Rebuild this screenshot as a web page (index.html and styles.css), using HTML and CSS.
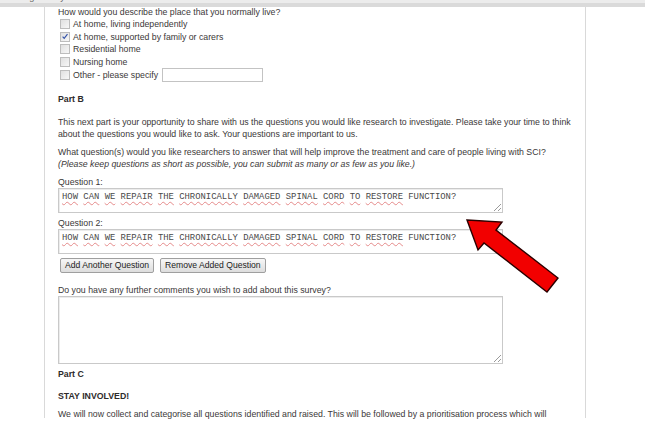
FILE: index.html
```html
<!DOCTYPE html>
<html lang="en">
<head>
<meta charset="utf-8">
<title>Survey</title>
<link rel="stylesheet" href="styles.css">
</head>
<body>
<div class="top"><span class="crumb">Tracking Survey</span></div>
<main class="page">
  <p class="q">How would you describe the place that you normally live?</p>
  <ul class="opts">
    <li><span class="cb"></span>At home, living independently</li>
    <li><span class="cb"><svg viewBox="0 0 9 9" width="9" height="9"><path d="M1.8 4.6 L3.6 6.6 L7.3 1.8" fill="none" stroke="#3352a8" stroke-width="1.3"/></svg></span>At home, supported by family or carers</li>
    <li><span class="cb"></span>Residential home</li>
    <li><span class="cb"></span>Nursing home</li>
    <li class="other"><span class="cb"></span>Other - please specify <span class="input"></span></li>
  </ul>
  <h3 class="h partb">Part B</h3>
  <p class="para">This next part is your opportunity to share with us the questions you would like research to investigate. Please take your time to think<br>about the questions you would like to ask. Your questions are important to us.</p>
  <p class="para2">What question(s) would you like researchers to answer that will help improve the treatment and care of people living with SCI?<br><em>(Please keep questions as short as possible, you can submit as many or as few as you like.)</em></p>
  <div class="label l1">Question 1:</div>
  <div class="ta grip"><span class="sp">HOW</span> <span class="sp">CAN</span> <span class="sp">WE</span> <span class="sp">REPAIR</span> <span class="sp">THE</span> <span class="sp">CHRONICALLY</span> <span class="sp">DAMAGED</span> <span class="sp">SPINAL</span> <span class="sp">CORD</span> <span class="sp">TO</span> <span class="sp">RESTORE</span> FUNCTION?</div>
  <div class="label l2">Question 2:</div>
  <div class="ta"><span class="sp">HOW</span> <span class="sp">CAN</span> <span class="sp">WE</span> <span class="sp">REPAIR</span> <span class="sp">THE</span> <span class="sp">CHRONICALLY</span> <span class="sp">DAMAGED</span> <span class="sp">SPINAL</span> <span class="sp">CORD</span> <span class="sp">TO</span> <span class="sp">RESTORE</span> FUNCTION?</div>
  <div class="buttons">
    <button class="btn b1">Add Another Question</button>
    <button class="btn b2">Remove Added Question</button>
  </div>
  <p class="comments">Do you have any further comments you wish to add about this survey?</p>
  <div class="ta big grip"></div>
  <h3 class="h partc">Part C</h3>
  <h3 class="h stay">STAY INVOLVED!</h3>
  <p class="last">We will now collect and categorise all questions identified and raised. This will be followed by a prioritisation process which will</p>
</main>
<svg class="arrow" width="645" height="424" viewBox="0 0 645 424">
  <polygon points="467,220 502,222 496,230 558,278 547,292 484,243 478,250" fill="#f20000" stroke="#2a0000" stroke-width="1.4" stroke-linejoin="miter"/>
</svg>
</body>
</html>
```
FILE: styles.css
```css
html, body {
  margin: 0;
  padding: 0;
  background: #fff;
  overflow: hidden;
}
body {
  font-family: "Liberation Sans", Arial, sans-serif;
  font-size: 8.75px;
  color: #3b3838;
  width: 645px;
  height: 424px;
  position: relative;
}
.top {
  height: 7px;
  overflow: hidden;
  background: linear-gradient(#ececec 0 3px, #dadada 3px 7px);
}
.crumb {
  display: block;
  margin-top: -8.5px;
  line-height: 10px;
  font-size: 9px;
  color: #666;
}
.page {
  margin-left: 44px;
  width: 527px;
  border-left: 1px solid #d9d9d9;
  border-right: 1px solid #d9d9d9;
  padding: 0 0 0 13px;
  height: 411px;
}
p, h3, ul {
  margin: 0;
  padding: 0;
}
.q {
  line-height: 11px;
}
.opts {
  list-style: none;
}
.opts li {
  height: 12.5px;
  line-height: 12.5px;
  display: flex;
  align-items: center;
}
.opts li.other {
  height: 14px;
}
.cb {
  width: 8px;
  height: 8px;
  border: 1px solid #bdbdbd;
  background: linear-gradient(135deg, #e0e0e0, #f7f7f7);
  margin: 0 3px 0 2px;
  display: flex;
  align-items: center;
  justify-content: center;
  flex: none;
}
.cb svg {
  display: block;
}
.input {
  width: 99px;
  height: 12px;
  border: 1px solid #c3c3c3;
  margin-left: 4px;
  background: #fff;
}
.h {
  font-size: 8.75px;
  font-weight: bold;
  line-height: 12px;
  color: #2e2b2b;
}
.partb { margin-top: 11px; }
.para { margin-top: 11px; line-height: 12px; }
.para2 { margin-top: 6px; line-height: 12px; }
.label { line-height: 12px; }
.l1 { margin-top: 6px; }
.l2 { margin-top: 5px; line-height: 11px; }
.ta {
  box-sizing: border-box;
  width: 445px;
  height: 25px;
  border: 1px solid #c9c9c9;
  box-shadow: inset 1px 1px 0 #ececec;
  font-family: "Liberation Mono", "Courier New", monospace;
  font-size: 8.9px;
  line-height: 10px;
  color: #4a4a4a;
  padding: 3px 3px;
  position: relative;
  white-space: nowrap;
}
.sp {
  text-decoration: underline wavy #e58a8a;
  text-decoration-thickness: 0.7px;
  text-underline-offset: 1.5px;
  text-decoration-skip-ink: none;
}
.grip::after {
  content: "";
  position: absolute;
  right: 1px;
  bottom: 1px;
  width: 7px;
  height: 7px;
  background: linear-gradient(135deg, transparent 0 48%, #9a9a9a 48% 56%, transparent 56% 72%, #9a9a9a 72% 80%, transparent 80%);
}
.buttons {
  display: flex;
  gap: 6px;
  margin-top: 4px;
  padding-left: 2px;
}
.btn {
  font-family: "Liberation Sans", Arial, sans-serif;
  font-size: 8.6px;
  color: #222;
  height: 15px;
  padding: 0 4px;
  border: 1px solid #9f9f9f;
  border-radius: 2px;
  background: linear-gradient(#f7f7f7, #dddddd);
  line-height: 13px;
  white-space: nowrap;
}
.comments { margin-top: 12px; line-height: 11px; }
.big { height: 68px; }
.partc { margin-top: 4px; }
.stay { margin-top: 10px; }
.last { margin-top: 6px; line-height: 12px; }
.arrow {
  position: absolute;
  left: 0;
  top: 0;
  pointer-events: none;
}
```
